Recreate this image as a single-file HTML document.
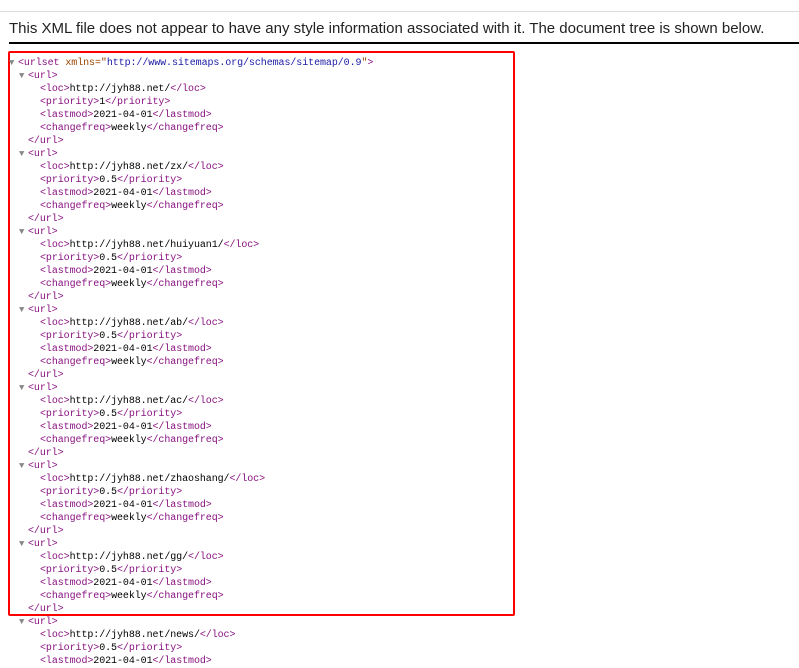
<!DOCTYPE html>
<html><head><meta charset="utf-8"><style>
html,body{margin:0;padding:0;background:#fff;width:799px;height:664px;overflow:hidden;}
.bar{position:absolute;left:0;top:0;width:799px;height:11px;border-bottom:1px solid #dcdcdc;background:#fff;}
.hdr{position:absolute;left:9px;top:20px;font:15px "Liberation Sans",sans-serif;color:#222;white-space:nowrap;}
.rule{position:absolute;left:9px;top:42px;width:790px;height:2px;background:#000;}
.box{position:absolute;left:8px;top:51px;width:503px;height:561px;border:2px solid #f00;border-radius:2px;}
#c{position:absolute;left:0;top:57px;font:10px/13px "Liberation Mono",monospace;color:#000;letter-spacing:-0.08px;}
#c div{height:13px;white-space:pre;position:relative;}
.t{color:#881280}.a{color:#994500}.v{color:#1a1aa6}
.g{position:absolute;color:#888;font-size:9px;}
</style></head><body>
<div class="bar"></div>
<div class="hdr">This XML file does not appear to have any style information associated with it. The document tree is shown below.</div>
<div class="rule"></div>
<div class="box"></div>
<div id="c"></div>
<script>
var urls=["http://jyh88.net/","http://jyh88.net/zx/","http://jyh88.net/huiyuan1/","http://jyh88.net/ab/","http://jyh88.net/ac/","http://jyh88.net/zhaoshang/","http://jyh88.net/gg/","http://jyh88.net/news/"];
function t(s){return '<span class="t">'+s.replace(/</g,'&lt;').replace(/>/g,'&gt;')+'</span>';}
function L(x,html,tri){return '<div style="padding-left:'+x+'px">'+(tri?'<span class="g" style="left:'+(x-9)+'px">▼</span>':'')+html+'</div>';}
var h=L(18,t('<urlset')+' <span class="a">xmlns="</span><span class="v">http://www.sitemaps.org/schemas/sitemap/0.9</span><span class="a">"</span>'+t('>'),1);
urls.forEach(function(u,i){
 var p=i==0?'1':'0.5';
 h+=L(28,t('<url>'),1);
 h+=L(40,t('<loc>')+u+t('</loc>'));
 h+=L(40,t('<priority>')+p+t('</priority>'));
 h+=L(40,t('<lastmod>')+'2021-04-01'+t('</lastmod>'));
 if(i<7){h+=L(40,t('<changefreq>')+'weekly'+t('</changefreq>'));
 h+=L(28,t('</url>'));}
});
document.getElementById('c').innerHTML=h;
</script>
</body></html>
